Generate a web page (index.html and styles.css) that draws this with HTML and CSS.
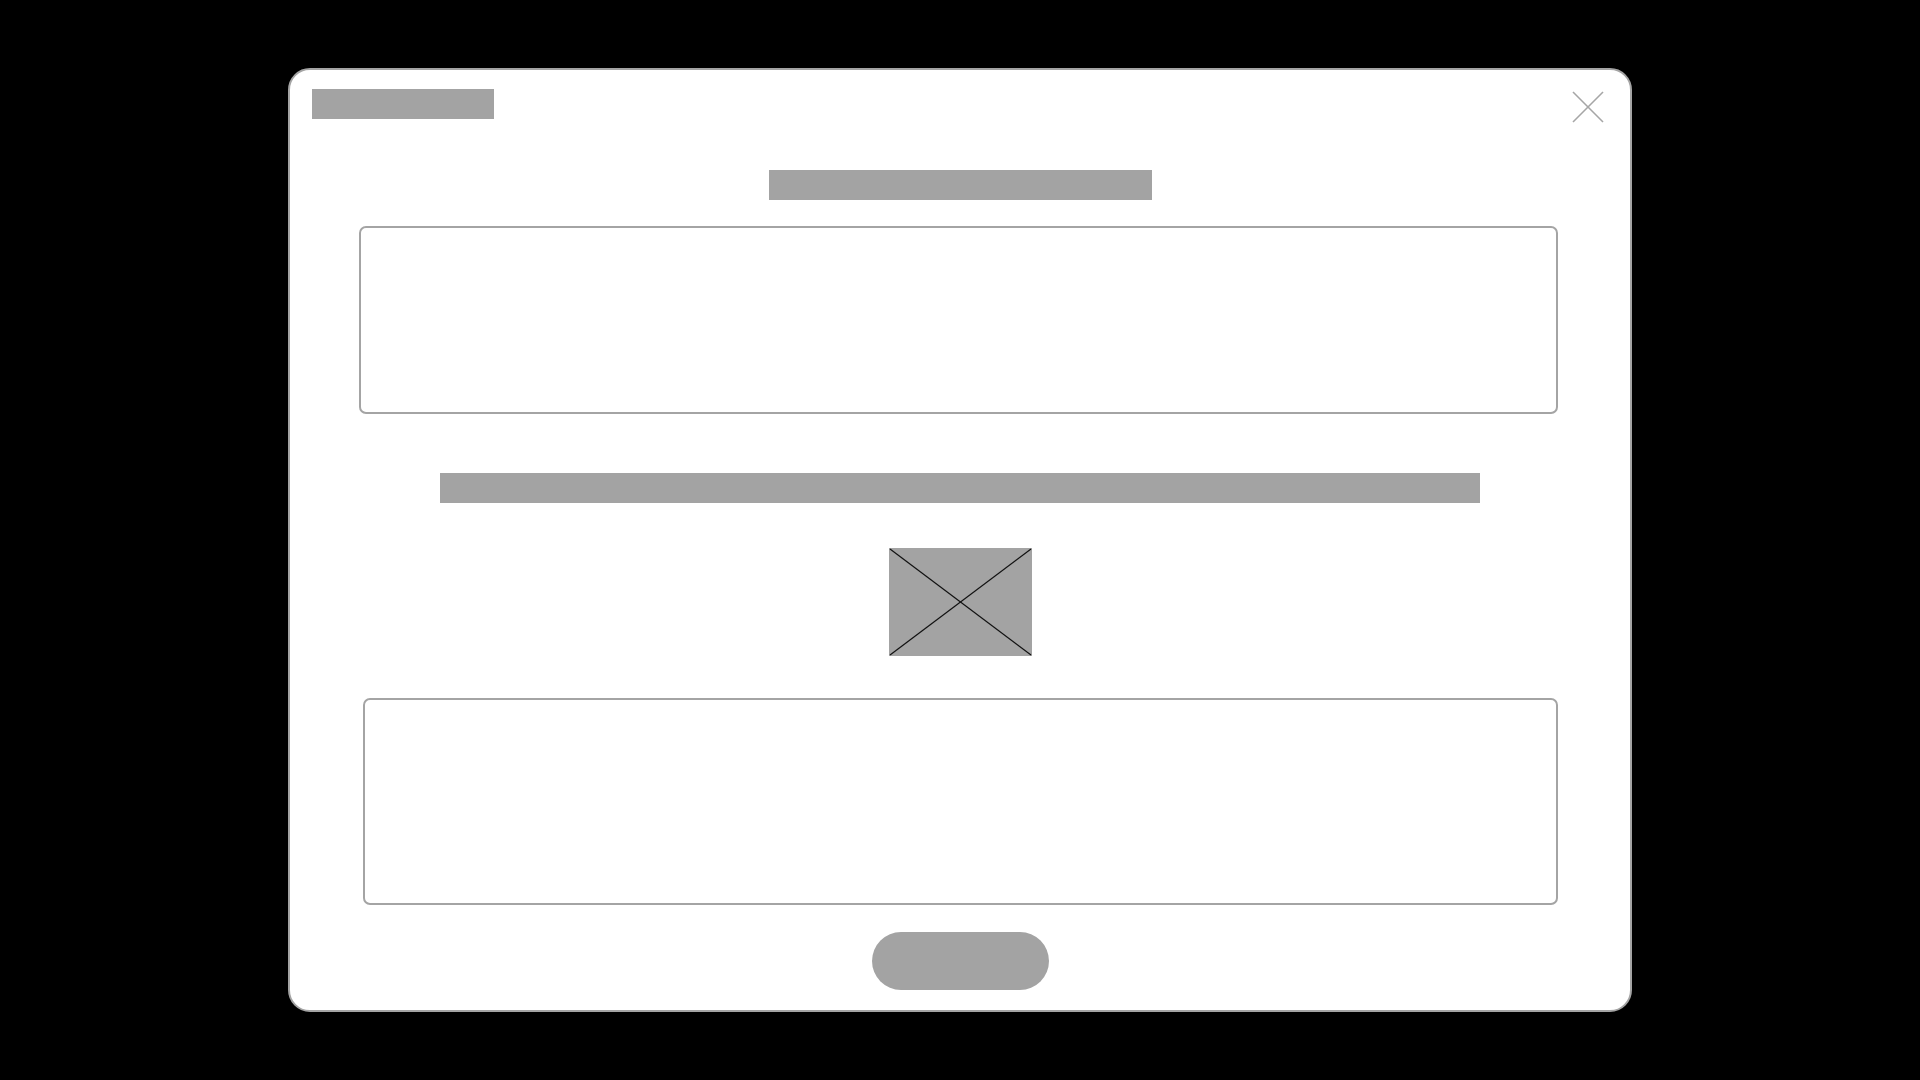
FILE: index.html
```html
<!DOCTYPE html>
<html lang="en">
<head>
    <meta charset="UTF-8">
    <meta name="viewport" content="width=device-width, initial-scale=1.0">
    <title>Dialog Wireframe</title>
    <link rel="stylesheet" href="styles.css">
</head>
<body>
    <div class="modal">
        <!-- Header: label block and close button -->
        <div class="modal-header">
            <div class="block block-label"></div>
            <button class="close-btn" aria-label="Close">
                <svg width="32" height="32" viewBox="0 0 32 32">
                    <line x1="1" y1="1" x2="31" y2="31" />
                    <line x1="31" y1="1" x2="1" y2="31" />
                </svg>
            </button>
        </div>

        <div class="block block-title"></div>

        <div class="panel panel-top"></div>

        <div class="block block-subtitle"></div>

        <!-- Image placeholder -->
        <div class="image-placeholder">
            <svg viewBox="0 0 143 108" preserveAspectRatio="none">
                <line x1="1" y1="1" x2="142" y2="107" />
                <line x1="142" y1="1" x2="1" y2="107" />
            </svg>
        </div>

        <div class="panel panel-bottom"></div>

        <button class="pill-btn"></button>
    </div>
</body>
</html>
```

FILE: styles.css
```css
html, body {
    margin: 0;
    padding: 0;
    background-color: #000;
    height: 100%;
}
body {
    font-family: "Liberation Sans", Arial, sans-serif;
    overflow: hidden;
}
.modal {
    box-sizing: border-box;
    width: 1344px;
    height: 944px;
    margin: 68px auto 0;
    background: #fff;
    border: 2px solid #a4a4a4;
    border-radius: 22px;
    padding: 19px 0;
    display: flex;
    flex-direction: column;
    align-items: center;
}
.modal-header {
    box-sizing: border-box;
    width: 100%;
    height: 34px;
    padding: 0 26px 0 22px;
    display: flex;
    justify-content: space-between;
    align-items: flex-start;
}
.block {
    background-color: #a3a3a3;
    height: 30px;
    flex-shrink: 0;
}
.block-label {
    width: 182px;
}
.close-btn {
    margin-top: 2px;
    padding: 0;
    border: none;
    background: none;
    width: 32px;
    height: 32px;
    cursor: pointer;
}
.close-btn svg {
    display: block;
}
.close-btn line {
    stroke: #a6a6a6;
    stroke-width: 1.6;
}
.block-title {
    width: 383px;
    margin-top: 47px;
}
.panel {
    box-sizing: border-box;
    border: 2px solid #a4a4a4;
    border-radius: 7px;
    flex-shrink: 0;
}
.panel-top {
    width: 1199px;
    height: 188px;
    margin-top: 26px;
    margin-right: 3px;
}
.block-subtitle {
    width: 1040px;
    margin-top: 59px;
}
.image-placeholder {
    width: 143px;
    height: 108px;
    margin-top: 45px;
    background-color: #a3a3a3;
    flex-shrink: 0;
}
.image-placeholder svg {
    display: block;
    width: 100%;
    height: 100%;
}
.image-placeholder line {
    stroke: #111;
    stroke-width: 1.2;
}
.panel-bottom {
    width: 1195px;
    height: 207px;
    margin-top: 42px;
    margin-left: 1px;
}
.pill-btn {
    width: 177px;
    height: 58px;
    margin-top: 27px;
    border: none;
    border-radius: 29px;
    background-color: #a3a3a3;
    flex-shrink: 0;
    cursor: pointer;
}
```
